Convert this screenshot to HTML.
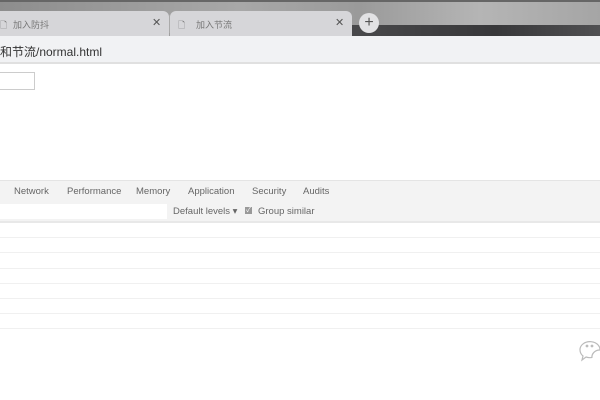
<!DOCTYPE html>
<html><head><meta charset="utf-8"><style>
body{margin:0;width:600px;height:400px;overflow:hidden;background:#fff;font-family:"Liberation Sans","Noto Sans CJK SC",sans-serif;position:relative}
.a{position:absolute}
.tab{top:11px;height:25px;background:#d6d6d9;border-radius:6px 6px 0 0;font-size:9px;color:#777}
.tab span{position:absolute;top:7px}
.x{font-size:11px;color:#555}
.dt{font-size:9.5px;color:#666;top:186px}
.line{left:0;width:600px;height:1px;background:#f0f0f0}
</style></head><body>
<div class="a" style="left:0;top:0;width:600px;height:36px;background:linear-gradient(90deg,#8d8d8d,#a8a8a8 40%,#9a9a9a 60%,#b5b5b5 80%,#a5a5a5)"></div>
<div class="a" style="left:0;top:0;width:600px;height:2px;background:#666"></div>
<div class="a" style="left:340px;top:25px;width:260px;height:11px;background:linear-gradient(90deg,#4a4a4c,#38383a 60%,#505052)"></div>
<div class="tab a" style="left:-6px;width:175px"><span style="left:6px">🗋</span><span style="left:19px">加入防抖</span><span class="x" style="left:158px;top:5px">✕</span></div>
<div class="a" style="left:169px;top:15px;width:1px;height:18px;background:#aaa"></div>
<div class="tab a" style="left:170px;width:182px"><span style="left:8px">🗋</span><span style="left:26px">加入节流</span><span class="x" style="left:165px;top:5px">✕</span></div>
<div class="a" style="left:359px;top:13px;width:20px;height:20px;border-radius:50%;background:#e2e2e4;color:#555;font-size:16px;line-height:19px;text-align:center">+</div>
<div class="a" style="left:0;top:36px;width:600px;height:26px;background:#f1f2f4"></div>
<div class="a" style="left:0;top:43px;font-size:12px;color:#333">和节流/normal.html</div>
<div class="a" style="left:0;top:62px;width:600px;height:2px;background:#e0e0e0"></div>
<div class="a" style="left:-2px;top:72px;width:35px;height:16px;border:1px solid #ccc"></div>
<div class="a" style="left:0;top:180px;width:600px;height:21px;background:#f3f3f3;border-top:1px solid #e4e4e4;border-bottom:1px solid #ddd"></div>
<div class="a dt" style="left:14px">Network</div>
<div class="a dt" style="left:67px">Performance</div>
<div class="a dt" style="left:136px">Memory</div>
<div class="a dt" style="left:188px">Application</div>
<div class="a dt" style="left:252px">Security</div>
<div class="a dt" style="left:303px">Audits</div>
<div class="a" style="left:0;top:202px;width:600px;height:19px;background:#f3f3f3;border-bottom:2px solid #e8e8e8"></div>
<div class="a" style="left:0;top:204px;width:167px;height:15px;background:#fff"></div>
<div class="a dt" style="left:173px;top:206px;font-size:9.5px">Default levels ▾</div>
<div class="a" style="left:245px;top:207px;width:7px;height:7px;background:#999;color:#fff;font-size:7px;line-height:7px;text-align:center">✓</div>
<div class="a dt" style="left:258px;top:206px">Group similar</div>
<div class="a line" style="top:237px"></div>
<div class="a line" style="top:252px"></div>
<div class="a line" style="top:268px"></div>
<div class="a line" style="top:283px"></div>
<div class="a line" style="top:298px"></div>
<div class="a line" style="top:313px"></div>
<div class="a line" style="top:328px"></div>
<svg class="a" style="left:578px;top:338px" width="22" height="30" viewBox="0 0 22 30"><g fill="#fff" stroke="#bbb" stroke-width="1.2"><path d="M2 12a10 8 0 1 1 6 7l-4 3 1-4a8 8 0 0 1-3-6z"/><circle cx="9" cy="8" r=".8"/><circle cx="14" cy="8" r=".8"/><path d="M14 20a8 7 0 1 1 8 6"/></g></svg>
</body></html>
